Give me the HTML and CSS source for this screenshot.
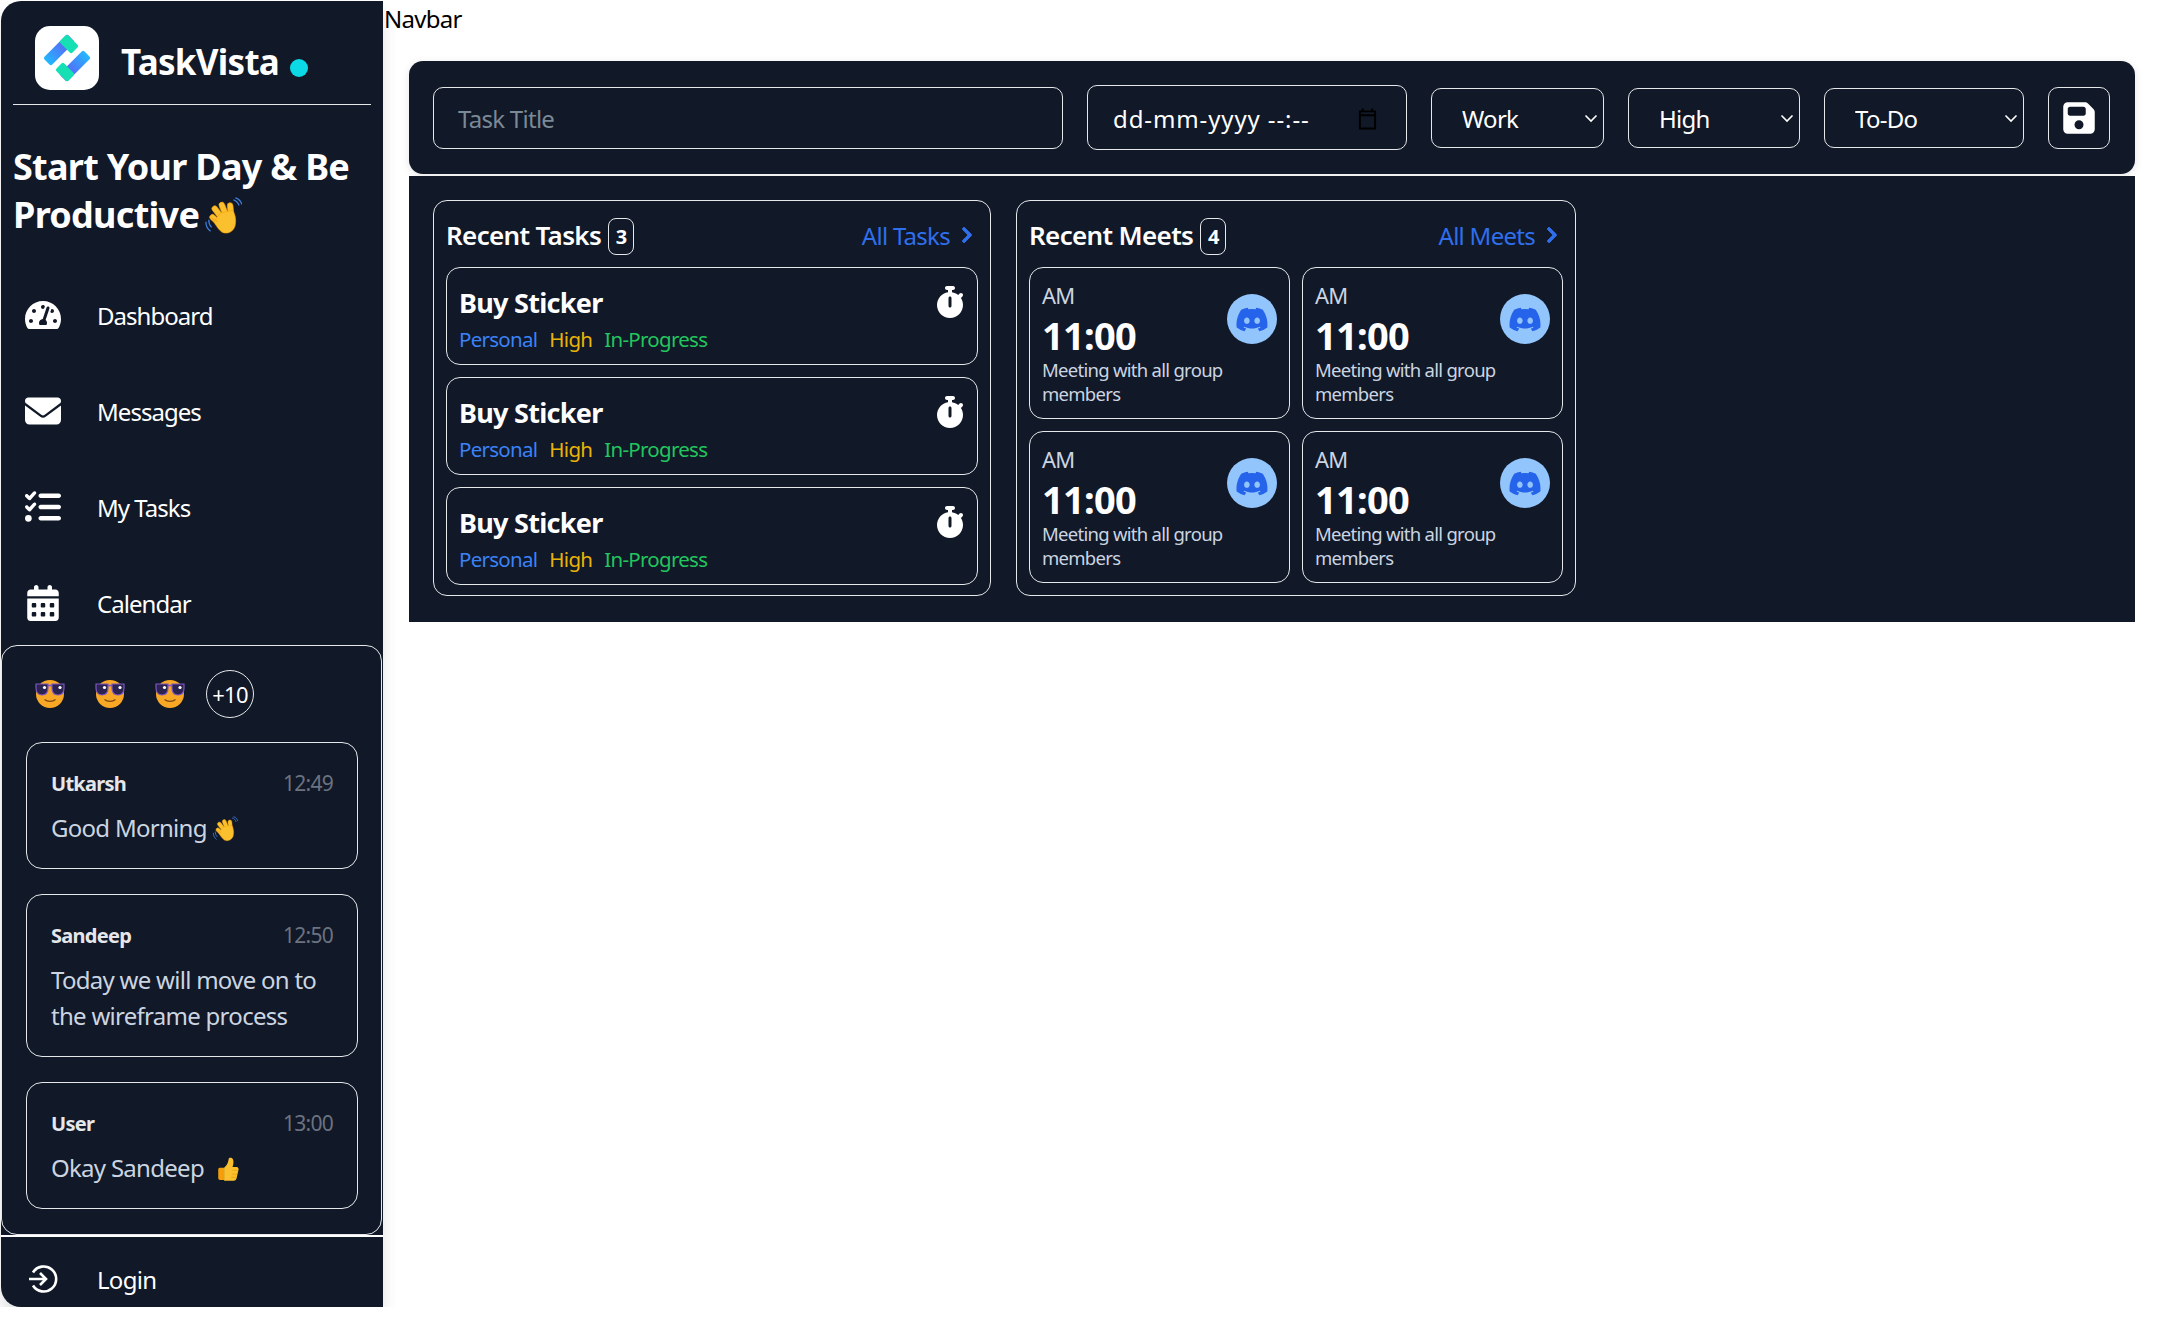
FILE: index.html
```html
<!DOCTYPE html>
<html lang="en">
<head>
    <meta charset="UTF-8">
    <meta name="viewport" content="width=device-width, initial-scale=1.0">
    <link rel="stylesheet" href="styles.css">
    <title>TaskVista</title>
</head>
<body>
    <svg class="sprites" width="0" height="0">
        <symbol id="i-stopwatch" viewBox="0 0 448 512"><path d="M176 0c-17.7 0-32 14.3-32 32s14.3 32 32 32h16V98.4C92.3 113.8 16 200 16 304c0 114.9 93.1 208 208 208s208-93.1 208-208c0-41.8-12.3-80.7-33.5-113.2l24.1-24.1c12.5-12.5 12.5-32.8 0-45.3s-32.8-12.5-45.3 0L355.7 143c-28.1-23-62.2-38.8-99.7-44.6V64h16c17.7 0 32-14.3 32-32s-14.3-32-32-32H224 176zm72 192V320c0 13.3-10.7 24-24 24s-24-10.7-24-24V192c0-13.3 10.7-24 24-24s24 10.7 24 24z"/></symbol>
        <symbol id="i-chevron" viewBox="0 0 320 512"><path d="M285.476 272.971L91.132 467.314c-9.373 9.373-24.569 9.373-33.941 0l-22.667-22.667c-9.357-9.357-9.375-24.522-.04-33.901L188.505 256 34.484 101.255c-9.335-9.379-9.317-24.544.04-33.901l22.667-22.667c9.373-9.373 24.569-9.373 33.941 0L285.475 239.03c9.373 9.372 9.373 24.568.001 33.941z"/></symbol>
        <symbol id="i-discord" viewBox="0 0 640 512"><path d="M524.531,69.836a1.5,1.5,0,0,0-.764-.7A485.065,485.065,0,0,0,404.081,32.03a1.816,1.816,0,0,0-1.923.91,337.461,337.461,0,0,0-14.9,30.6,447.848,447.848,0,0,0-134.426,0,309.541,309.541,0,0,0-15.135-30.6,1.89,1.89,0,0,0-1.924-.91A483.689,483.689,0,0,0,116.085,69.137a1.712,1.712,0,0,0-.788.676C39.068,183.651,18.186,294.69,28.43,404.354a2.016,2.016,0,0,0,.765,1.375A487.666,487.666,0,0,0,176.02,479.918a1.9,1.9,0,0,0,2.063-.676A348.2,348.2,0,0,0,208.12,430.4a1.86,1.86,0,0,0-1.019-2.588,321.173,321.173,0,0,1-45.868-21.853,1.885,1.885,0,0,1-.185-3.126c3.082-2.309,6.166-4.711,9.109-7.137a1.819,1.819,0,0,1,1.9-.256c96.229,43.917,200.41,43.917,295.5,0a1.812,1.812,0,0,1,1.924.233c2.944,2.426,6.027,4.851,9.132,7.16a1.884,1.884,0,0,1-.162,3.126,301.407,301.407,0,0,1-45.89,21.83,1.875,1.875,0,0,0-1,2.611,391.055,391.055,0,0,0,30.014,48.815,1.864,1.864,0,0,0,2.063.7A486.048,486.048,0,0,0,610.7,405.729a1.882,1.882,0,0,0,.765-1.352C623.729,277.594,590.933,167.465,524.531,69.836ZM222.491,337.58c-28.972,0-52.844-26.587-52.844-59.239S193.056,219.1,222.491,219.1c29.665,0,53.306,26.82,52.843,59.239C275.334,310.993,251.924,337.58,222.491,337.58Zm195.38,0c-28.971,0-52.843-26.587-52.843-59.239S388.437,219.1,417.871,219.1c29.667,0,53.307,26.82,52.844,59.239C470.715,310.993,447.538,337.58,417.871,337.58Z"/></symbol>
        <symbol id="i-select" viewBox="0 0 14 9"><path d="M1.5 1.5 7 7l5.500-5.500" fill="none" stroke="#fff" stroke-width="1.6"/></symbol>
        <symbol id="e-wave" viewBox="0 0 40 40">
            <path d="M5 24c0 3 1 6 3 8M2 26c0 4 2 8 5 10M31 3c3 1 5 3 6 6M33 1c4 1 6 4 7 7" fill="none" stroke="#3f7fe0" stroke-width="1.3"/>
            <g fill="#fbc02d" stroke="#f59e0b" stroke-width=".6">
                <rect x="9" y="17" width="6" height="15" rx="3" transform="rotate(-48 12 24)"/>
                <rect x="12" y="8" width="6" height="19" rx="3" transform="rotate(-38 15 17)"/>
                <rect x="18" y="5" width="6" height="19" rx="3" transform="rotate(-22 21 14)"/>
                <rect x="25" y="6" width="6" height="17" rx="3" transform="rotate(-6 28 14)"/>
                <path d="M12 24 17 17l13-3c3 4 4 10 3 15-1 7-8 11-14 8-3-2-5-5-7-8l-4-7 6 4z"/>
            </g>
        </symbol>
        <symbol id="e-thumb" viewBox="0 0 40 40">
            <path d="M8 18h6v19H8c-2 0-3-1-3-3V21c0-2 1-3 3-3z" fill="#f59e0b"/>
            <path d="M14 18c4-3 6-7 7-13 0-3 6-3 7 1 1 4 0 8-1 11h6c3 0 4 3 3 5l-3 13c-1 2-2 3-4 3H14z" fill="#fbc02d"/>
            <path d="M27 22h8M26 28h8M25 33h7" stroke="#f59e0b" stroke-width="1.3"/>
        </symbol>
        <symbol id="e-cool" viewBox="0 0 30 28">
            <circle cx="15" cy="14" r="14" fill="#f9a825"/>
            <path d="M1 4h12v4c0 4-2 7-6 7S1 12 1 8zM17 4h12v4c0 4-2 7-6 7s-6-3-6-7z" fill="#2b2350" stroke="#7e57c2" stroke-width="1.2"/>
            <path d="M13 5.500h4" stroke="#7e57c2" stroke-width="1.6"/>
            <circle cx="9.500" cy="7.500" r="1.600" fill="#fff"/>
            <circle cx="25" cy="7.500" r="1.600" fill="#fff"/>
            <path d="M9.500 19.500c3 2.500 8 2.500 11 0" fill="none" stroke="#7a4a12" stroke-width="1.3"/>
        </symbol>
    </svg>

    <aside class="sidebar">
        <div class="brand">
            <svg class="logo" viewBox="0 0 64 64">
                <defs>
                    <linearGradient id="logoUp"><stop offset="0" stop-color="#22b8ff"/><stop offset="1" stop-color="#6a4ff0"/></linearGradient>
                    <linearGradient id="logoDown" x1="1" x2="0"><stop offset="0" stop-color="#22b8ff"/><stop offset="1" stop-color="#6a4ff0"/></linearGradient>
                </defs>
                <rect width="64" height="64" rx="15" fill="#fff"/>
                <rect x="7" y="18.5" width="34" height="11" rx="2" fill="url(#logoUp)" transform="rotate(-45 24 24)"/>
                <rect x="25.5" y="12.5" width="17" height="11" rx="2" fill="#15e0b4" transform="rotate(45 34 18)"/>
                <rect x="23" y="34.5" width="34" height="11" rx="2" fill="url(#logoDown)" transform="rotate(-45 40 40)"/>
                <rect x="21.5" y="40.5" width="17" height="11" rx="2" fill="#15e0b4" transform="rotate(45 30 46)"/>
            </svg>
            <span class="brand-name">TaskVista</span>
            <span class="brand-dot"></span>
        </div>
        <h1 class="tagline">Start Your Day &amp; Be Productive <svg class="tagline-emoji"><use href="#e-wave"/></svg></h1>

        <nav class="nav">
            <a class="nav-item">
                <svg class="nav-icon" viewBox="0 0 576 512"><path d="M288 32C128.94 32 0 160.94 0 320c0 52.8 14.25 102.26 39.06 144.8 5.61 9.62 16.3 15.2 27.44 15.2h443c11.14 0 21.83-5.58 27.44-15.2C561.75 422.26 576 372.8 576 320c0-159.06-128.94-288-288-288zm0 64c14.71 0 26.58 10.13 30.32 23.65-1.11 2.26-2.64 4.23-3.45 6.67l-9.22 27.67c-5.13 3.49-10.97 6.01-17.64 6.01-17.67 0-32-14.33-32-32S270.33 96 288 96zM96 384c-17.67 0-32-14.33-32-32s14.33-32 32-32 32 14.33 32 32-14.33 32-32 32zm48-160c-17.67 0-32-14.33-32-32s14.33-32 32-32 32 14.33 32 32-14.33 32-32 32zm246.77-72.41l-61.33 184C343.13 347.33 352 364.54 352 384c0 11.72-3.38 22.55-8.88 32H232.88c-5.5-9.45-8.88-20.28-8.88-32 0-33.94 26.5-61.43 59.9-63.59l61.34-184.01c4.17-12.56 17.73-19.45 30.36-15.17 12.57 4.19 19.35 17.79 15.17 30.36zm14.66 57.2l15.52-46.55c3.47-1.29 7.13-2.23 11.05-2.23 17.67 0 32 14.33 32 32s-14.33 32-32 32c-11.38-.01-20.89-6.28-26.57-15.22zM480 384c-17.67 0-32-14.33-32-32s14.33-32 32-32 32 14.33 32 32-14.33 32-32 32z"/></svg>
                Dashboard
            </a>
            <a class="nav-item">
                <svg class="nav-icon" viewBox="0 0 512 512"><path d="M48 64C21.5 64 0 85.5 0 112c0 15.1 7.1 29.3 19.2 38.4L236.8 313.6c11.4 8.5 27 8.5 38.4 0L492.8 150.4c12.1-9.1 19.2-23.3 19.2-38.4c0-26.5-21.5-48-48-48H48zM0 176V384c0 35.3 28.7 64 64 64H448c35.3 0 64-28.7 64-64V176L294.4 339.2c-22.8 17.1-54 17.1-76.8 0L0 176z"/></svg>
                Messages
            </a>
            <a class="nav-item">
                <svg class="nav-icon" viewBox="0 0 512 512"><path d="M152.1 38.2c9.9 8.9 10.7 24 1.8 33.9l-72 80c-4.4 4.9-10.6 7.8-17.2 7.9s-12.9-2.4-17.6-7L7 113C-2.3 103.6-2.3 88.4 7 79s24.6-9.4 33.9 0l22.1 22.1 55.1-61.2c8.9-9.9 24-10.7 33.9-1.8zm0 160c9.9 8.9 10.7 24 1.8 33.9l-72 80c-4.4 4.9-10.6 7.8-17.2 7.9s-12.9-2.4-17.6-7L7 273c-9.4-9.4-9.4-24.6 0-33.9s24.6-9.4 33.9 0l22.1 22.1 55.1-61.2c8.9-9.9 24-10.7 33.9-1.8zM192 96c0-17.7 14.3-32 32-32H480c17.7 0 32 14.3 32 32s-14.3 32-32 32H224c-17.7 0-32-14.3-32-32zm0 160c0-17.7 14.3-32 32-32H480c17.7 0 32 14.3 32 32s-14.3 32-32 32H224c-17.7 0-32-14.3-32-32zm0 160c0-17.7 14.3-32 32-32H480c17.7 0 32 14.3 32 32s-14.3 32-32 32H224c-17.7 0-32-14.3-32-32zM48 368a48 48 0 1 1 0 96 48 48 0 1 1 0-96z"/></svg>
                My Tasks
            </a>
            <a class="nav-item">
                <svg class="nav-icon" viewBox="0 0 448 512"><path d="M128 0c17.7 0 32 14.3 32 32V64H288V32c0-17.7 14.3-32 32-32s32 14.3 32 32V64h48c26.5 0 48 21.5 48 48v48H0V112C0 85.5 21.5 64 48 64H96V32c0-17.7 14.3-32 32-32zM0 192H448V464c0 26.5-21.5 48-48 48H48c-26.5 0-48-21.5-48-48V192zm64 80v32c0 8.8 7.2 16 16 16h32c8.8 0 16-7.2 16-16V272c0-8.8-7.2-16-16-16H80c-8.8 0-16 7.2-16 16zm128 0v32c0 8.8 7.2 16 16 16h32c8.8 0 16-7.2 16-16V272c0-8.8-7.2-16-16-16H208c-8.8 0-16 7.2-16 16zm144-16c-8.8 0-16 7.2-16 16v32c0 8.8 7.2 16 16 16h32c8.8 0 16-7.2 16-16V272c0-8.8-7.2-16-16-16H336zM64 400v32c0 8.8 7.2 16 16 16h32c8.8 0 16-7.2 16-16V400c0-8.8-7.2-16-16-16H80c-8.8 0-16 7.2-16 16zm144-16c-8.8 0-16 7.2-16 16v32c0 8.8 7.2 16 16 16h32c8.8 0 16-7.2 16-16V400c0-8.8-7.2-16-16-16H208zm112 16v32c0 8.8 7.2 16 16 16h32c8.8 0 16-7.2 16-16V400c0-8.8-7.2-16-16-16H336c-8.8 0-16 7.2-16 16z"/></svg>
                Calendar
            </a>
        </nav>

        <section class="chat">
            <div class="avatars">
                <svg class="avatar"><use href="#e-cool"/></svg>
                <svg class="avatar"><use href="#e-cool"/></svg>
                <svg class="avatar"><use href="#e-cool"/></svg>
                <span class="avatar-more">+10</span>
            </div>
            <article class="message">
                <div class="message-head"><strong>Utkarsh</strong><time>12:49</time></div>
                <p>Good Morning <svg class="inline-emoji"><use href="#e-wave"/></svg></p>
            </article>
            <article class="message">
                <div class="message-head"><strong>Sandeep</strong><time>12:50</time></div>
                <p>Today we will move on to the wireframe process</p>
            </article>
            <article class="message">
                <div class="message-head"><strong>User</strong><time>13:00</time></div>
                <p>Okay Sandeep <svg class="inline-emoji thumb"><use href="#e-thumb"/></svg></p>
            </article>
        </section>

        <a class="login">
            <svg class="login-icon" viewBox="0 0 30 28"><path d="M5.5 7.5A12.5 12.5 0 1 1 5.5 20.5M1.5 14h17M12.5 8l6 6-6 6" fill="none" stroke="#fff" stroke-width="2.6"/></svg>
            Login
        </a>
    </aside>

    <main class="content">
        <div class="navbar">Navbar</div>

        <form class="task-form">
            <input class="field title-field" type="text" placeholder="Task Title">
            <div class="field date-field">
                <span>dd-mm-yyyy --:--</span>
                <svg class="date-icon" viewBox="0 0 20 22"><path d="M5 0v3M15 0v3M2 3h16v18H2zM2 7h16" fill="none" stroke="#000" stroke-width="2"/></svg>
            </div>
            <div class="select-box work"><select><option>Work</option></select><svg class="select-arrow"><use href="#i-select"/></svg></div>
            <div class="select-box high"><select><option>High</option></select><svg class="select-arrow"><use href="#i-select"/></svg></div>
            <div class="select-box todo"><select><option>To-Do</option></select><svg class="select-arrow"><use href="#i-select"/></svg></div>
            <button class="save" type="button">
                <svg viewBox="0 0 448 512"><path d="M64 32C28.7 32 0 60.7 0 96V416c0 35.3 28.7 64 64 64H384c35.3 0 64-28.7 64-64V173.3c0-17-6.7-33.3-18.7-45.3L352 50.7C340 38.7 323.7 32 306.7 32H64zm0 96c0-17.7 14.3-32 32-32H288c17.7 0 32 14.3 32 32v64c0 17.7-14.3 32-32 32H96c-17.7 0-32-14.3-32-32V128zM224 288a64 64 0 1 1 0 128 64 64 0 1 1 0-128z"/></svg>
            </button>
        </form>

        <div class="panel">
            <section class="box tasks-box">
                <header class="box-head">
                    <h2>Recent Tasks</h2><span class="count">3</span>
                    <a class="all-link">All Tasks <svg><use href="#i-chevron"/></svg></a>
                </header>
                <div class="task-list">
                    <article class="task">
                        <div><h3>Buy Sticker</h3><p class="tags"><span class="tag-blue">Personal</span><span class="tag-yellow">High</span><span class="tag-green">In-Progress</span></p></div>
                        <svg class="stopwatch"><use href="#i-stopwatch"/></svg>
                    </article>
                    <article class="task">
                        <div><h3>Buy Sticker</h3><p class="tags"><span class="tag-blue">Personal</span><span class="tag-yellow">High</span><span class="tag-green">In-Progress</span></p></div>
                        <svg class="stopwatch"><use href="#i-stopwatch"/></svg>
                    </article>
                    <article class="task">
                        <div><h3>Buy Sticker</h3><p class="tags"><span class="tag-blue">Personal</span><span class="tag-yellow">High</span><span class="tag-green">In-Progress</span></p></div>
                        <svg class="stopwatch"><use href="#i-stopwatch"/></svg>
                    </article>
                </div>
            </section>

            <section class="box meets-box">
                <header class="box-head">
                    <h2>Recent Meets</h2><span class="count">4</span>
                    <a class="all-link">All Meets <svg><use href="#i-chevron"/></svg></a>
                </header>
                <div class="meet-grid">
                    <article class="meet">
                        <div class="meet-top"><div><div class="meet-ampm">AM</div><div class="meet-time">11:00</div></div><span class="discord"><svg><use href="#i-discord"/></svg></span></div>
                        <p>Meeting with all group members</p>
                    </article>
                    <article class="meet">
                        <div class="meet-top"><div><div class="meet-ampm">AM</div><div class="meet-time">11:00</div></div><span class="discord"><svg><use href="#i-discord"/></svg></span></div>
                        <p>Meeting with all group members</p>
                    </article>
                    <article class="meet">
                        <div class="meet-top"><div><div class="meet-ampm">AM</div><div class="meet-time">11:00</div></div><span class="discord"><svg><use href="#i-discord"/></svg></span></div>
                        <p>Meeting with all group members</p>
                    </article>
                    <article class="meet">
                        <div class="meet-top"><div><div class="meet-ampm">AM</div><div class="meet-time">11:00</div></div><span class="discord"><svg><use href="#i-discord"/></svg></span></div>
                        <p>Meeting with all group members</p>
                    </article>
                </div>
            </section>
        </div>
    </main>
</body>
</html>
```

FILE: styles.css
```css
* {
    box-sizing: border-box;
}

body {
    font-family: "Noto Sans", "Open Sans", sans-serif;
    letter-spacing: -0.03em;
    background: #fff;
    color: #000;
    margin: 0;
    display: flex;
    align-items: flex-start;
    font-size: 24px;
}

.sprites {
    position: absolute;
}

h1, h2, h3, p {
    margin: 0;
}

/* sidebar */
.sidebar {
    width: 382px;
    height: 1306px;
    margin: 1px 0 0 1px;
    background: #111827;
    color: #fff;
    border-radius: 20px 0 0 20px;
    box-shadow: 0 10px 15px rgba(0, 0, 0, 0.12);
    flex-shrink: 0;
    display: flex;
    flex-direction: column;
}

.brand {
    display: flex;
    align-items: center;
    height: 104px;
    margin: 0 12px;
    padding: 25px 0 15px 22px;
    border-bottom: 1px solid #e5e7eb;
}

.logo {
    width: 64px;
    height: 64px;
}

.brand-name {
    font-size: 35px;
    font-weight: 700;
    margin: 8px 0 0 22px;
}

.brand-dot {
    width: 18px;
    height: 18px;
    border-radius: 50%;
    background: #0bd9e5;
    margin: 20px 0 0 11px;
}

.tagline {
    font-size: 36px;
    font-weight: 700;
    line-height: 48px;
    margin: 38px 12px 0;
    height: 96px;
}

.tagline-emoji {
    width: 38px;
    height: 38px;
    margin-left: -4px;
    vertical-align: -7px;
}

.nav {
    display: flex;
    flex-direction: column;
    gap: 16px;
    margin-top: 36px;
}

.nav-item {
    display: flex;
    align-items: center;
    gap: 36px;
    height: 80px;
    padding-left: 24px;
    letter-spacing: -0.04em;
}

.nav-icon {
    width: 36px;
    height: 36px;
    fill: #fff;
    flex-shrink: 0;
}

.chat {
    margin-top: 2px;
    height: 590px;
    border: 1px solid #e5e7eb;
    border-radius: 16px;
    padding: 24px 23px 0 24px;
    display: flex;
    flex-direction: column;
    gap: 24px;
    width: 381px;
}

.avatars {
    display: flex;
    align-items: center;
    height: 48px;
    padding-left: 9px;
    gap: 30px;
}

.avatar {
    width: 30px;
    height: 28px;
}

.avatar-more {
    width: 48px;
    height: 48px;
    border: 1px solid #e5e7eb;
    border-radius: 50%;
    display: flex;
    align-items: center;
    justify-content: center;
    font-size: 22px;
    margin-left: -9px;
}

.message {
    border: 1px solid #e5e7eb;
    border-radius: 16px;
    padding: 25px 24px 22px;
}

.message + .message {
    margin-top: 1px;
}

.message-head {
    display: flex;
    justify-content: space-between;
    align-items: center;
    height: 30px;
    margin-bottom: 12px;
    font-size: 20px;
}

.message-head strong {
    font-weight: 700;
    color: #e5e7eb;
}

.message-head time {
    font-size: 21px;
    color: #6b7280;
}

.message p {
    font-size: 24px;
    line-height: 36px;
    color: #cbd5e1;
}

.inline-emoji {
    width: 26px;
    height: 26px;
    vertical-align: -5px;
}

.thumb {
    margin-left: 6px;
}

.login {
    flex: 1;
    display: flex;
    align-items: center;
    gap: 39px;
    padding: 14px 0 0 26px;
    border-top: 2px solid #fff;
}

.login-icon {
    width: 31px;
    height: 28px;
}

/* main column */
.content {
    flex: 1;
    min-width: 0;
}

.navbar {
    height: 61px;
    padding: 1px 0 0 1px;
    line-height: 36px;
}

.task-form {
    margin: 0 25px 0 26px;
    height: 113px;
    background: #111827;
    border-radius: 14px;
    padding: 0 24px;
    display: flex;
    align-items: center;
    gap: 24px;
    box-shadow: 0 2px 8px rgba(0, 0, 0, 0.1);
}

.field, .task-form select, .save {
    background: #111827;
    border: 1px solid #e5e7eb;
    border-radius: 10px;
    color: #fff;
    font: inherit;
    letter-spacing: inherit;
}

.title-field {
    width: 630px;
    height: 62px;
    padding: 2px 24px 0;
}

.title-field::placeholder {
    color: #7b8896;
}

.date-field {
    width: 320px;
    height: 65px;
    padding: 2px 29px 0 25px;
    display: flex;
    align-items: center;
    justify-content: space-between;
}

.date-field span {
    letter-spacing: 0.037em;
}

.date-icon {
    width: 19px;
    height: 22px;
}

.select-box {
    position: relative;
    height: 60px;
}

.select-box.work { width: 173px; }
.select-box.high { width: 172px; }
.select-box.todo { width: 200px; }

.select-box select {
    appearance: none;
    width: 100%;
    height: 100%;
    padding: 2px 0 0 30px;
}

.select-arrow {
    position: absolute;
    right: 6px;
    top: 26px;
    width: 14px;
    height: 9px;
    pointer-events: none;
}

.save {
    width: 62px;
    height: 62px;
    padding: 0;
    display: flex;
    align-items: center;
    justify-content: center;
}

.save svg {
    width: 32px;
    height: 36px;
    fill: #fff;
}

.panel {
    margin: 2px 25px 0 26px;
    height: 446px;
    background: #111827;
    padding: 24px;
    display: flex;
    gap: 25px;
    align-items: flex-start;
    color: #fff;
}

.box {
    height: 396px;
    border: 1px solid #e5e7eb;
    border-radius: 14px;
    padding: 12px 12px 0;
}

.tasks-box { width: 558px; }
.meets-box { width: 560px; }

.box-head {
    display: flex;
    align-items: center;
    height: 44px;
    margin-bottom: 10px;
}

.box-head h2 {
    font-size: 26px;
    font-weight: 600;
    letter-spacing: -0.025em;
}

.count {
    width: 26px;
    height: 37px;
    margin: 3px 0 0 7px;
    border: 1px solid #e5e7eb;
    border-radius: 8px;
    display: flex;
    align-items: center;
    justify-content: center;
    font-size: 20px;
    font-weight: 700;
}

.all-link {
    margin-left: auto;
    display: flex;
    align-items: center;
    gap: 11px;
    color: #2f6feb;
    padding-right: 5px;
}

.all-link svg {
    width: 12px;
    height: 18px;
    fill: currentColor;
    stroke: currentColor;
    stroke-width: 24;
}

.task-list {
    display: flex;
    flex-direction: column;
    gap: 12px;
}

.task {
    height: 98px;
    border: 1px solid #e5e7eb;
    border-radius: 14px;
    padding: 15px 13px 0 12px;
    display: flex;
    justify-content: space-between;
    align-items: flex-start;
}

.task h3 {
    font-size: 27px;
    font-weight: 700;
    line-height: 40px;
}

.tags {
    display: flex;
    gap: 12px;
    font-size: 20.5px;
    line-height: 30px;
    margin-top: 1px;
}

.tag-blue { color: #3b82f6; }
.tag-yellow { color: #eab308; }
.tag-green { color: #22c55e; }

.stopwatch {
    width: 28px;
    height: 32px;
    fill: #fff;
    margin-top: 3px;
}

.meet-grid {
    display: grid;
    grid-template-columns: 261px 261px;
    gap: 12px;
}

.meet {
    height: 152px;
    border: 1px solid #e5e7eb;
    border-radius: 14px;
    padding: 13px 12px 0;
}

.meet-top {
    display: flex;
    justify-content: space-between;
    align-items: flex-start;
}

.meet-ampm {
    font-size: 22px;
    line-height: 28px;
    color: #cbd5e1;
}

.meet-time {
    font-size: 38px;
    font-weight: 700;
    line-height: 44px;
    margin-top: 4px;
}

.discord {
    width: 50px;
    height: 50px;
    margin-top: 13px;
    border-radius: 50%;
    background: #93c5fd;
    display: flex;
    align-items: center;
    justify-content: center;
}

.discord svg {
    width: 34px;
    height: 27px;
    fill: #2563eb;
}

.meet p {
    font-size: 18.5px;
    line-height: 24px;
    margin-top: 1px;
    color: #cbd5e1;
}
```
